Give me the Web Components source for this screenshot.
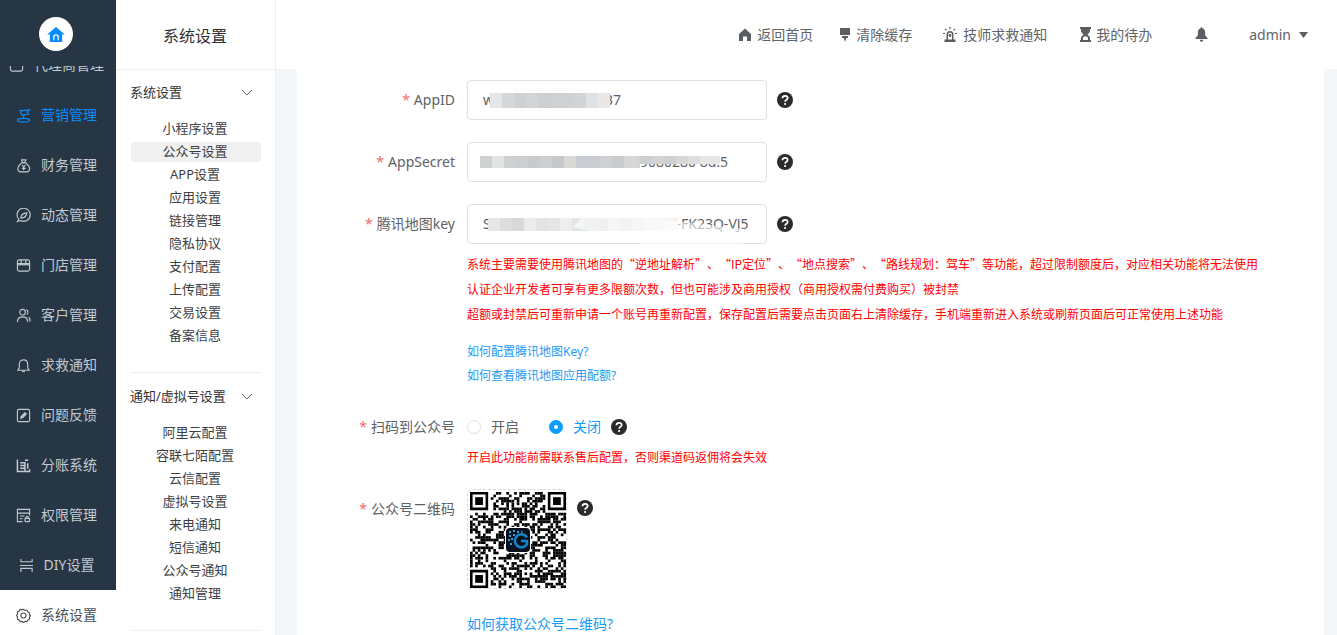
<!DOCTYPE html>
<html lang="zh">
<head>
<meta charset="utf-8">
<title>系统设置</title>
<style>
  html, body { margin: 0; height: 100%; overflow: hidden; }
  body {
    display: flex;
    height: 635px;
    font: 14px/20px "Noto Sans", "Noto Sans CJK SC", sans-serif;
    color: #606266;
    background: #fff;
  }
  .right { flex: 1; min-width: 0; display: flex; flex-direction: column; }
</style>
</head>
<body>
  <main-nav></main-nav>
  <sub-nav></sub-nav>
  <div class="right">
    <top-bar></top-bar>
    <settings-form></settings-form>
  </div>

<script>
const ICONS = {
  store: '<rect x="1.5" y="2" width="13" height="12" rx="2"/><path d="M1.5 6h13M5.5 2v4M10.5 2v4M1.5 6c0 2 3.5 2 4 0 .5 2 4.500 2 5 0 .5 2 4 2 4 0"/>',
  flag: '<path d="M4.500 2.500 6 7.500 13.500 6.500 12 4 14.500 1.800 7 2.800Z"/><path d="M8.500 7.500 7.500 12"/><ellipse cx="8" cy="13" rx="6.500" ry="2"/>',
  money: '<path d="M6 2h4.500l-1 3h-2.500Z"/><path d="M6.500 5C3.500 7 1.800 9.500 2 12c.2 2 1.600 2.800 3 2.800h6.500c1.500 0 2.800-.9 3-2.800.2-2.500-1.600-5-4.500-7Z"/><path d="M6.500 7.500 8.200 9.500 10 7.500M8.200 9.500v3.500M6.300 11h4"/>',
  compass: '<path d="M1.500 14.500 3 12A7 7 0 1 1 4.800 13.400Z"/><path d="M5 10.500C5.500 7.500 8 5.500 11.500 5.200 11.200 8.500 8.800 10.800 5 10.500Z"/>',
  users: '<circle cx="7" cy="4.500" r="3"/><path d="M1.500 15c0-3.500 2-5.500 5.500-5.500s5.500 2 5.500 5.500M11 2c2 .5 2.500 3.500.5 5M13.500 9.500c1 1 1.500 3 1.500 5"/>',
  bell: '<path d="M8 2c-3 0-4.500 2.200-4.500 5v3.500L2 13h12l-1.500-2.500V7C12.500 4.200 11 2 8 2Z"/><path d="M6.500 14.500h3"/>',
  edit: '<rect x="1.500" y="1.500" width="13" height="13" rx="1.500"/><path d="M5 11 5.500 9 9.500 5 11 6.500 7 10.500Z" fill="currentColor"/>',
  chart: '<path d="M1.500 1.500v13h13V12M4.500 5h5v9.500M4.500 8h5M4.500 11h5M12.500 5.500v6M9.500 2.500h3.500" stroke-width="1.600"/>',
  perm: '<path d="M7 14.500H1.500v-13h13V8M1.500 5.500h13M4 8.500h5M4 11.500h3"/><rect x="9.500" y="11" width="5" height="3.500" rx=".8"/><path d="M10.700 11V9.800c0-1.400 2.600-1.400 2.600 0V11"/>',
  diy: '<path d="M2 1v3h12V1M1 8h14M2 15v-4h12v4"/>',
  gear: '<path d="M8 1.500l1.700 1.200 2-.2 1 1.800 1.800 1-.2 2L15.500 8l-1.200 1.700.2 2-1.800 1-1 1.800-2-.2L8 15.500l-1.700-1.200-2 .2-1-1.800-1.800-1 .2-2L.5 8l1.200-1.700-.2-2 1.800-1 1-1.800 2 .2Z"/><circle cx="8" cy="8" r="2.700"/>'
};

class MainNav extends HTMLElement {
  constructor() {
    super();
    this.attachShadow({ mode: 'open' });
  }

  connectedCallback() {
    const items = [
      ['store', '代理商管理'], ['flag', '营销管理', 'on'], ['money', '财务管理'], ['compass', '动态管理'],
      ['store', '门店管理'], ['users', '客户管理'], ['bell', '求救通知'], ['edit', '问题反馈'],
      ['chart', '分账系统'], ['perm', '权限管理'], ['diy', 'DIY设置'], ['gear', '系统设置', 'cur']
    ];
    const rows = items.map(([icon, text, cls]) => `
      <div class="row ${cls || ''}">
        <svg width="15" height="15" viewBox="0 0 16 16">${ICONS[icon]}</svg>
        <span>${text}</span>
      </div>`).join('');

    this.shadowRoot.innerHTML = `
      <style>
        :host {
          display: flex;
          flex-direction: column;
          flex: none;
          width: 116px;
          height: 635px;
          background: #263645;
          overflow: hidden;
          font-size: 14px;
        }
        .logo {
          flex: none;
          height: 66px;
          display: flex;
          justify-content: center;
          padding: 17px 4px 0 0;
          box-sizing: border-box;
          background: #263645;
          position: relative;
          z-index: 1;
        }
        .circle {
          width: 34px;
          height: 34px;
          border-radius: 50%;
          background: #fff;
          display: flex;
          align-items: center;
          justify-content: center;
        }
        .list { margin-top: -26px; }
        .row {
          height: 50px;
          display: flex;
          align-items: center;
          justify-content: center;
          gap: 10px;
          padding-right: 3px;
          color: #c3c9cf;
        }
        .row svg { fill: none; stroke: currentColor; stroke-width: 1.200; flex: none; }
        .on { color: #0a8cff; }
        .cur { background: #fff; color: #4c5258; }
      </style>
      <div class="logo">
        <div class="circle">
          <svg width="18" height="15" viewBox="0 0 20 17">
            <path d="M10 0 20 8.500H17V17H3V8.500H0Z" fill="#0a8cff"/>
            <path d="M7.500 15v-3.500a2.500 2.500 0 0 1 5 0V15" fill="none" stroke="#fff" stroke-width="1.300"/>
          </svg>
        </div>
      </div>
      <div class="list">${rows}</div>
    `;
  }
}

class SubNav extends HTMLElement {
  constructor() {
    super();
    this.attachShadow({ mode: 'open' });
  }

  connectedCallback() {
    const groups = [
      ['系统设置', ['小程序设置', '公众号设置', 'APP设置', '应用设置', '链接管理', '隐私协议', '支付配置', '上传配置', '交易设置', '备案信息']],
      ['通知/虚拟号设置', ['阿里云配置', '容联七陌配置', '云信配置', '虚拟号设置', '来电通知', '短信通知', '公众号通知', '通知管理']]
    ];
    const html = groups.map(([title, links]) => `
      <section>
        <div class="head"><span>${title}</span>
          <svg width="12" height="7" viewBox="0 0 12 7"><path d="M1 1 6 6 11 1" fill="none" stroke="#606a78"/></svg>
        </div>
        ${links.map(l => `<div class="link ${l === '公众号设置' ? 'active' : ''}">${l}</div>`).join('')}
      </section>`).join('');

    this.shadowRoot.innerHTML = `
      <style>
        :host {
          display: block;
          flex: none;
          width: 160px;
          height: 635px;
          box-sizing: border-box;
          border-right: 1px solid #ebeef2;
          background: #fff;
          overflow: hidden;
          color: #303133;
        }
        .title {
          height: 70px;
          box-sizing: border-box;
          border-bottom: 1px solid #ebeef2;
          padding-top: 25px;
          padding-right: 1px;
          text-align: center;
          font-size: 16px;
          line-height: 22px;
        }
        .body { padding: 0 14px 0 15px; }
        section {
          padding: 13px 0 23px;
          border-bottom: 1px solid #ebeef2;
          font-size: 13px;
        }
        section + section { padding-top: 14px; }
        .head {
          display: flex;
          justify-content: space-between;
          align-items: center;
          height: 20px;
          margin: -1px 0 17px -1px;
          padding-right: 8px;
        }
        .link {
          height: 20px;
          line-height: 18px;
          margin-bottom: 3px;
          padding-right: 2px;
          text-align: center;
          border-radius: 2px;
          color: #3c3f44;
        }
        .active { background: #f0f0f0; }
      </style>
      <div class="title">系统设置</div>
      <div class="body">${html}</div>
    `;
  }
}

class TopBar extends HTMLElement {
  constructor() {
    super();
    this.attachShadow({ mode: 'open' });
  }

  connectedCallback() {
    this.shadowRoot.innerHTML = `
      <style>
        :host {
          display: flex;
          flex: none;
          height: 69px;
          box-sizing: border-box;
          align-items: center;
          justify-content: flex-end;
          padding-right: 29px;
          background: #fff;
          color: #5f6367;
          font-size: 14px;
        }
        .item { display: flex; align-items: center; gap: 6px; }
        svg { fill: #5a5e62; flex: none; }
      </style>
      <div class="item" style="margin-right:27px">
        <svg width="12" height="13" viewBox="0 0 12 13"><path d="M6 .5 12 6V13H8V8.500H4V13H0V6Z"/></svg>
        <span>返回首页</span>
      </div>
      <div class="item" style="margin-right:31px">
        <svg width="10" height="14" viewBox="0 0 10 14"><path d="M0 0h10v7H0ZM2 8h6v2H6.200L5 14 3.800 10H2Z"/></svg>
        <span>清除缓存</span>
      </div>
      <div class="item" style="margin-right:33px">
        <svg width="14" height="15" viewBox="0 0 14 15">
          <path d="M3.500 12.500V7.500a3.500 3.500 0 0 1 7 0v5H9V7.500a2 2 0 0 0-4 0v5ZM1.500 12.500h11V15h-11Z"/><circle cx="7" cy="8.500" r="1.400"/>
          <path d="M7 0v2.200M2 1.800l1.400 1.500M12 1.800l-1.400 1.500M0 6.500h2M12 6.500h2" stroke="#5a5e62" stroke-width="1.200" fill="none"/>
        </svg>
        <span>技师求救通知</span>
      </div>
      <div class="item" style="margin-right:43px;gap:5px">
        <svg width="11" height="15" viewBox="0 0 11 15"><path d="M0 0h11v2H10V4C10 6 7.500 6.800 7.500 7.500S10 9 10 11V13h1v2H0v-2h1V11C1 9 3.500 8.200 3.500 7.500S1 6 1 4V2H0ZM3 11V13h5V11C8 10 6 9.500 5.500 9 5 9.500 3 10 3 11Z"/></svg>
        <span>我的待办</span>
      </div>
      <div class="item" style="margin-right:41px">
        <svg width="13" height="15" viewBox="0 0 16 18"><path d="M8 0c.8 0 1.200.5 1.200 1.200C11.500 2 12.500 4 12.500 6.500V10L15.500 13.500V14.500H.5V13.500L3.500 10V6.500C3.500 4 4.500 2 6.800 1.200 6.800.5 7.200 0 8 0ZM5.800 15.500h4.400C10 17 9 18 8 18S6 17 5.800 15.500Z"/></svg>
      </div>
      <div class="item" style="gap:8px">
        <span>admin</span>
        <svg width="9" height="6" viewBox="0 0 9 6"><path d="M0 0h9L4.500 6Z"/></svg>
      </div>
    `;
  }
}

// pixelated smudge over a hidden value; colors are the block greys, left to right
class BlurMask extends HTMLElement {
  constructor() {
    super();
    this.attachShadow({ mode: 'open' });
  }

  connectedCallback() {
    const colors = (this.getAttribute('colors') || '').split(',');
    const blocks = colors.map(c => `<i style="background:${c}"></i>`).join('');
    this.shadowRoot.innerHTML = `
      <style>
        :host {
          display: flex;
          position: absolute;
          overflow: hidden;
        }
        i { display: block; width: 12px; flex: none; }
      </style>
      ${blocks}
    `;
  }
}

class FormRow extends HTMLElement {
  constructor() {
    super();
    this.attachShadow({ mode: 'open' });
  }

  connectedCallback() {
    const label = this.getAttribute('label');
    this.shadowRoot.innerHTML = `
      <style>
        :host { display: flex; align-items: flex-start; }
        .label {
          flex: none;
          width: 158px;
          height: 40px;
          line-height: 40px;
          padding-right: 12px;
          box-sizing: border-box;
          text-align: right;
          white-space: nowrap;
          color: #606266;
        }
        .star { color: #f56c6c; margin-right: 4px; }
        .control { min-width: 0; flex: 1; }
      </style>
      <div class="label"><span class="star">*</span>${label}</div>
      <div class="control"><slot></slot></div>
    `;
  }
}

class HelpIcon extends HTMLElement {
  constructor() {
    super();
    this.attachShadow({ mode: 'open' });
  }

  connectedCallback() {
    this.shadowRoot.innerHTML = `
      <style>
        :host { display: inline-flex; flex: none; width: 16px; height: 16px; }
      </style>
      <svg width="16" height="16" viewBox="0 0 16 16">
        <circle cx="8" cy="8" r="8" fill="#2b2b2d"/>
        <path d="M5.400 6.200C5.500 4.700 6.600 3.800 8.100 3.800 9.600 3.800 10.700 4.700 10.700 6 10.700 7.800 8.100 7.800 8.100 9.800" fill="none" stroke="#fff" stroke-width="1.700"/>
        <circle cx="8.100" cy="12" r="1.100" fill="#fff"/>
      </svg>
    `;
  }
}

class TextField extends HTMLElement {
  constructor() {
    super();
    this.attachShadow({ mode: 'open' });
  }

  connectedCallback() {
    this.shadowRoot.innerHTML = `
      <style>
        :host { display: flex; align-items: center; gap: 10px; height: 40px; position: relative; }
        .box {
          position: relative;
          width: 300px;
          height: 40px;
          box-sizing: border-box;
          border: 1px solid #dcdfe6;
          border-radius: 4px;
          padding: 0 15px;
          line-height: 38px;
          color: #606266;
          overflow: hidden;
          white-space: nowrap;
        }
      </style>
      <div class="box">${this.getAttribute('value')}<slot></slot></div>
      <help-icon></help-icon>
      <slot name="over"></slot>
    `;
  }
}

class QrCode extends HTMLElement {
  constructor() {
    super();
    this.attachShadow({ mode: 'open' });
  }

  connectedCallback() {
    const n = 37;
    const cells = [];
    let seed = 48271;
    const next = () => (seed = seed * 16807 % 2147483647) / 2147483647;
    const inFinder = (x, y, ox, oy) => x >= ox - 1 && x <= ox + 7 && y >= oy - 1 && y <= oy + 7;
    for (let y = 0; y < n; y++) {
      for (let x = 0; x < n; x++) {
        const skip = inFinder(x, y, 0, 0) || inFinder(x, y, n - 7, 0) || inFinder(x, y, 0, n - 7);
        if (!skip && next() > 0.48) cells.push(`<rect x="${x}" y="${y}" width="1.030" height="1.030"/>`);
      }
    }
    const finder = (ox, oy) => `
      <path d="M${ox} ${oy}h7v7h-7Zm1 1v5h5v-5Z" fill-rule="evenodd"/>
      <rect x="${ox + 2}" y="${oy + 2}" width="3" height="3"/>`;

    this.shadowRoot.innerHTML = `
      <style>
        :host {
          display: block;
          position: relative;
          width: 100px;
          height: 100px;
          box-sizing: border-box;
          border: 1px dashed #d9d9d9;
          border-radius: 6px;
          padding: 2px 0 0 2px;
        }
        svg { display: block; }
      </style>
      <svg width="96" height="96" viewBox="0 0 37 37">
        ${cells.join('')}${finder(0, 0)}${finder(n - 7, 0)}${finder(0, n - 7)}
      </svg>
      <svg width="26" height="26" viewBox="0 0 26 26" style="position:absolute;left:37px;top:37px">
        <rect width="26" height="26" rx="4" fill="#fff"/>
        <rect x="1" y="1" width="24" height="24" rx="4" fill="#07121c"/>
        <path d="M22 10.500A6.500 6.500 0 1 0 22 17V14H16" fill="none" stroke="#1583c8" stroke-width="2.600"/>
        <g fill="#2aa3e0">
          <rect x="4" y="4" width="2" height="2"/><rect x="8" y="3" width="2" height="2"/><rect x="12" y="4" width="2" height="2"/>
          <rect x="16" y="4" width="1.500" height="1.500"/><rect x="4" y="8" width="2" height="2"/><rect x="8" y="7" width="2" height="2"/>
          <rect x="3" y="12" width="2" height="2"/><rect x="6" y="11" width="2" height="2"/><rect x="5" y="16" width="2" height="2"/>
        </g>
      </svg>
    `;
  }
}

class RadioOption extends HTMLElement {
  constructor() {
    super();
    this.attachShadow({ mode: 'open' });
  }

  connectedCallback() {
    const on = this.hasAttribute('checked');
    this.shadowRoot.innerHTML = `
      <style>
        :host { display: inline-flex; align-items: center; gap: 10px; color: ${on ? '#0a9dfd' : '#606266'}; }
        .dot {
          width: 14px;
          height: 14px;
          box-sizing: border-box;
          border-radius: 50%;
          border: 1px solid ${on ? '#0a9dfd' : '#dcdfe6'};
          background: ${on ? '#0a9dfd' : '#fff'};
          display: flex;
          align-items: center;
          justify-content: center;
        }
        .dot::after { content: ""; width: 4px; height: 4px; border-radius: 50%; background: #fff; display: ${on ? 'block' : 'none'}; }
      </style>
      <span class="dot"></span><slot></slot>
    `;
  }
}

class SettingsForm extends HTMLElement {
  constructor() {
    super();
    this.attachShadow({ mode: 'open' });
  }

  connectedCallback() {
    this.shadowRoot.innerHTML = `
      <style>
        :host {
          display: block;
          position: relative;
          flex: 1;
          min-height: 0;
          overflow: hidden;
          background: #fff;
        }
        .gutter { position: absolute; left: 0; top: 0; bottom: 0; width: 21px; background: #f4f7fa; }
        .edge { position: absolute; right: 0; top: 0; bottom: 0; width: 13px; background: #f4f7fa; }
        .panel { padding: 11px 0 0 33px; }
        .gap { margin-bottom: 22px; }
        .note {
          color: #ff0000;
          font-family: "Noto Sans CJK SC", sans-serif;
          font-size: 12px;
          line-height: 25px;
          white-space: nowrap;
          text-spacing-trim: space-all;
        }
        .link { color: #1a9bf5; font-size: 12px; line-height: 24px; white-space: nowrap; }
        .radios { display: flex; align-items: center; height: 40px; }
        .tail { position: absolute; top: 0; overflow: hidden; }
        .smear { position: absolute; left: 0; top: 0; pointer-events: none; }
      </style>
      <div class="gutter"></div>
      <div class="edge"></div>
      <div class="panel">
        <form-row class="gap" label="AppID">
          <text-field value="w">
            <span class="tail" style="left:137px">37</span>
            <blur-mask style="left:22px;top:12px;width:120px;height:15px" colors="#e5e6e7,#d6d7d9,#cfd0d2,#d3d4d6,#cdcfd1,#cfd0d2,#d0d1d3,#d2d3d5,#dfe2e4,#e9e8e6,#cfd3d6"></blur-mask>
          </text-field>
        </form-row>
        <form-row class="gap" label="AppSecret">
          <text-field value="">
            <span class="tail" style="left:172px">9080280 8d.5</span>
            <blur-mask style="left:12px;top:13px;width:160px;height:12px" colors="#cfd1d3,#e2e3e3,#cfd0d2,#cdcecf,#c9cacc,#cdcecf,#c6c8cc,#d9d9d6,#c9cdd1,#c9cdd1,#cfd0d2,#c9ccce,#d6d7d7,#d4d4d4"></blur-mask>
            <blur-mask style="left:172px;top:13px;width:80px;height:8px" colors="#cdcecf,#d3d3d3,#cfd0d2,#d8d8d8,#dddddd,#e6e6e6,#e6e6e6"></blur-mask>
          </text-field>
        </form-row>
        <form-row label="腾讯地图key">
          <text-field value="S">
            <span class="tail" style="left:192px;width:90px">P8-FK23Q-VJ5</span>
            <blur-mask style="left:20px;top:13px;width:190px;height:13px" colors="#e6e6e6,#dddddd,#d8d8d8,#ececec,#e4e3e2,#e6e4e4,#eeeeee,#e3e6e7,#dadedf,#d8dadb,#e8e8e4,#dcdfe3,#e9e9e9,#f0f0f0,#f2f2f2,#f4f4f4"></blur-mask>
            <svg slot="over" class="smear" width="300" height="50" viewBox="0 0 300 50">
              <path d="M120 9 173 13 286 26V36L250 48 190 44 106 23Z" fill="#fff" fill-opacity=".6"/>
            </svg>
          </text-field>
          <div class="note" style="margin-top:7px">系统主要需要使用腾讯地图的“逆地址解析”、“IP定位”、“地点搜索”、“路线规划：驾车”等功能，超过限制额度后，对应相关功能将无法使用</div>
          <div class="note">认证企业开发者可享有更多限额次数，但也可能涉及商用授权（商用授权需付费购买）被封禁</div>
          <div class="note">超额或封禁后可重新申请一个账号再重新配置，保存配置后需要点击页面右上清除缓存，手机端重新进入系统或刷新页面后可正常使用上述功能</div>
          <div class="link" style="margin-top:14px">如何配置腾讯地图Key?</div>
          <div class="link">如何查看腾讯地图应用配额?</div>
        </form-row>
        <form-row label="扫码到公众号" style="margin-top:19px">
          <div class="radios">
            <radio-option style="margin-right:30px">开启</radio-option>
            <radio-option checked style="margin-right:10px">关闭</radio-option>
            <help-icon></help-icon>
          </div>
          <div class="note" style="margin-top:-3px">开启此功能前需联系售后配置，否则渠道码返佣将会失效</div>
        </form-row>
        <form-row label="公众号二维码" style="margin-top:20px">
          <div style="display:flex;gap:10px;align-items:flex-start">
            <qr-code></qr-code>
            <help-icon style="margin-top:11px"></help-icon>
          </div>
          <div class="link" style="font-size:14px;margin-top:23px">如何获取公众号二维码?</div>
        </form-row>
      </div>
    `;
  }
}

customElements.define('main-nav', MainNav);
customElements.define('sub-nav', SubNav);
customElements.define('top-bar', TopBar);
customElements.define('blur-mask', BlurMask);
customElements.define('form-row', FormRow);
customElements.define('help-icon', HelpIcon);
customElements.define('text-field', TextField);
customElements.define('qr-code', QrCode);
customElements.define('radio-option', RadioOption);
customElements.define('settings-form', SettingsForm);
</script>
</body>
</html>
